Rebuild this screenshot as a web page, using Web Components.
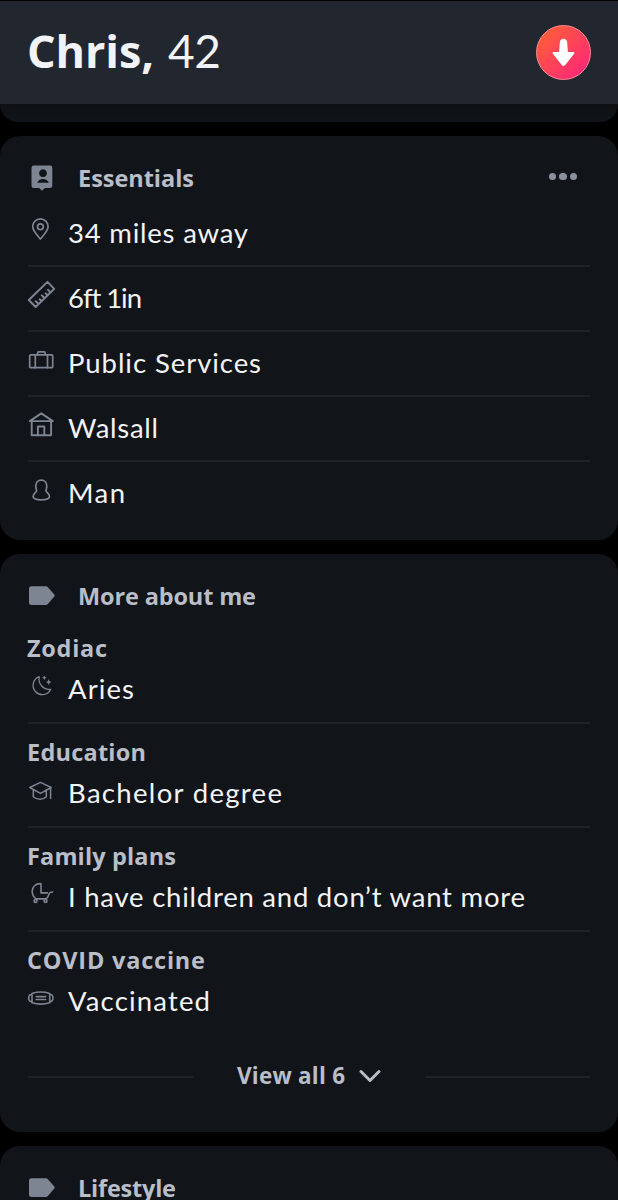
<!DOCTYPE html>
<html lang="en">
<head>
<meta charset="utf-8">
<title>Chris, 42</title>
<style>
    html, body {
        margin: 0;
        padding: 0;
        height: 1200px;
        overflow: hidden;
        background: #000;
    }

    body {
        font-family: Lato, "Open Sans", sans-serif;
        color: #f1f3f6;
    }
</style>
</head>
<body>
<profile-page></profile-page>

<script>
const icons = {
    badge: `<path fill="currentColor" stroke="none" fill-rule="evenodd" d="M6.7 1.5h16.4a2.2 2.2 0 0 1 2.2 2.2v18.1a2.2 2.2 0 0 1-2.2 2.2h-5.2L15 26.800 12.100 24H6.700a2.200 2.200 0 0 1-2.200-2.200V3.700a2.200 2.200 0 0 1 2.200-2.200zM16 5.300a3.900 3.900 0 1 0 .01 0zM10.300 18.800h11.400c-.6-2.500-3-3.900-5.700-3.900s-5.100 1.400-5.700 3.900z"/>`,
    tag: `<path fill="currentColor" stroke="none" d="M4.500 4.200h14.200c1 0 1.800.4 2.400 1.200l6.200 7c.6.700.6 1.400 0 2.100l-6.200 7.200c-.6.800-1.400 1.200-2.400 1.200H4.500a2.500 2.500 0 0 1-2.500-2.500V6.700a2.500 2.500 0 0 1 2.500-2.500z"/>`,
    pin: `<path d="M13.400 24C11 20.800 5.700 16.300 5.700 11.600a7.700 7.700 0 0 1 15.400 0C21.100 16.300 15.800 20.800 13.400 24z"/><circle cx="13.400" cy="11.700" r="2.900"/>`,
    ruler: `<path stroke-width="2" d="M1.800 20 20.500 1.900l6.700 7L8.600 27zM11.600 24.100 8.800 21.200M14.600 21.200l-1.900-2M17.600 18.300l-2.800-2.900M20.600 15.400l-1.900-2M23.600 12.500l-2.500-2.600"/>`,
    suitcase: `<rect x="2.700" y="9.900" width="23" height="12.800" rx="1"/><path d="M8.300 10v12.700M20.500 10v12.700M10.600 9.700V7.800q0-1 1-1h5.600q1 0 1 1v1.900"/>`,
    house: `<path stroke-width="1.900" d="M2.800 11.100 14.300 3.400l11.500 7.700zM4.700 11.300V25.200h19.400V11.300M10.900 25v-8.500h6.400V25"/>`,
    person: `<path d="M14.300 5.200c-3.500 0-5.500 2.600-5.500 6 0 2.100.8 3.500.8 4.600 0 1.600-3.500 2.600-3.500 5.700 0 2.200 3 3.300 8.200 3.300s8.200-1.100 8.200-3.300c0-3.100-3.500-4.100-3.500-5.700 0-1.100.8-2.500.8-4.600 0-3.400-2-6-5.500-6z"/>`,
    moon: `<path stroke-width="1.300" d="M12.200 4.600A9.300 9.300 0 1 0 23.700 17.500C16.500 17.800 10.800 12 12.200 4.600z"/><path fill="currentColor" stroke="none" d="m17.300 3.500.8 1.500 1.500.8-1.500.8-.8 1.500-.8-1.500-1.500-.8 1.500-.8zM21.700 7.300l.9 1.900 1.900.9-1.900.9-.9 1.900-.9-1.900-1.900-.9 1.900-.9z"/>`,
    cap: `<path stroke-width="1.500" d="M2.800 11.500 13.500 6.300l10.700 5.200-10.700 5.900zM6.300 13.600v7.100c3.600 3.300 9.900 3.300 13 0v-7M23.600 12v10.500"/>`,
    stroller: `<path stroke-width="1.600" d="M14 3.700v9.200h6.400M14 3.700C8.500 3.300 5.200 7 5.200 11.200c0 3.700 1.600 6 3.800 7.700h9.700c2.600-1.200 3-3.700 3.600-5.400.4-1.200 1.400-1.600 3.400-1.500"/><circle cx="8.500" cy="20.900" r="1.400"/><circle cx="18.500" cy="20.900" r="1.400"/>`,
    mask: `<path stroke-width="1.600" d="M5 9.400Q13.800 6.600 22.700 9.400v9.300Q13.800 21.500 5 18.700zM5 10.200C.6 10.500.6 17.600 5 17.900M22.700 10.200c4.400.3 4.400 7.400 0 7.700M9.200 12.600h9.400M9.200 15.500h9.400"/>`
};

class ProfileIcon extends HTMLElement {
    constructor() {
        super();
        this.shadowDOM = this.attachShadow({mode: "open"});
    }

    connectedCallback() {
        this.shadowDOM.innerHTML = `
        <style>
            :host {
                display: block;
                flex: none;
                width: 28px;
                height: 28px;
                margin-left: -1px;
                color: #7d8492;
            }

            svg {
                display: block;
            }
        </style>
        <svg width="28" height="28" viewBox="0 0 28 28" fill="none" stroke="currentColor" stroke-width="1.700" stroke-linejoin="round" stroke-linecap="round">${icons[this.getAttribute("name")]}</svg>`;
    }
}

// Spreads its letters so that the line takes the width given in the attribute.
class FitText extends HTMLElement {
    constructor() {
        super();
        this.shadowDOM = this.attachShadow({mode: "open"});
    }

    connectedCallback() {
        this.shadowDOM.innerHTML = `
        <style>
            :host {
                display: inline-block;
                white-space: nowrap;
                font-variant-ligatures: none;
            }
        </style>
        <slot></slot>`;
        const width = Number(this.getAttribute("width"));
        const natural = this.getBoundingClientRect().width;
        const gaps = this.textContent.length - 1;
        this.style.letterSpacing = ((width - natural) / gaps).toFixed(3) + "px";
        this.style.width = width + "px";
    }
}

class ProfileHeader extends HTMLElement {
    constructor() {
        super();
        this.shadowDOM = this.attachShadow({mode: "open"});
    }

    connectedCallback() {
        this.shadowDOM.innerHTML = `
        <style>
            :host {
                display: flex;
                align-items: center;
                justify-content: space-between;
                box-sizing: border-box;
                height: 103px;
                margin-top: 1px;
                padding: 0 27px;
                background: #22262e;
            }

            h1 {
                display: flex;
                align-items: baseline;
                gap: 14px;
                margin: 0 0 4px;
                font-size: 46px;
                line-height: 54px;
                font-weight: 400;
            }

            .name {
                font-family: "Open Sans", sans-serif;
                font-size: 45px;
                font-weight: 700;
            }

            button {
                width: 55px;
                height: 55px;
                padding: 0;
                border: 1px solid #ff8b95;
                border-radius: 50%;
                background: linear-gradient(135deg, #ff6036 8%, #fd267a 92%) border-box;
            }

            svg {
                display: block;
            }
        </style>
        <h1><fit-text class="name" width="127">Chris,</fit-text><fit-text width="53">42</fit-text></h1>
        <button aria-label="Close profile">
            <svg width="53" height="53" viewBox="0 0 54 54" fill="#fff">
                <path d="M27 13c2.200 0 3.500 1.400 3.700 3.400l.8 10.200h5.500c1.100 0 1.500.9.800 1.800l-9 11.400c-1.100 1.300-2.500 1.300-3.600 0l-9-11.400c-.7-.9-.3-1.800.8-1.800h5.500l.8-10.200c.2-2 1.500-3.400 3.700-3.400z"/>
            </svg>
        </button>`;
    }
}

class ProfileCard extends HTMLElement {
    constructor() {
        super();
        this.shadowDOM = this.attachShadow({mode: "open"});
    }

    connectedCallback() {
        this.shadowDOM.innerHTML = `
        <style>
            :host {
                display: block;
                box-sizing: border-box;
                padding: 0 28px 13px;
                border-radius: 20px;
                background: #111418;
            }

            header {
                display: flex;
                align-items: center;
                height: 48px;
                padding-top: 18px;
            }

            h2 {
                flex: 1;
                margin: 0 0 0 23px;
                font: 700 23.500px/28px "Open Sans", sans-serif;
                color: #b9bec9;
            }
        </style>
        <header>
            <profile-icon name="${this.getAttribute("icon")}"></profile-icon>
            <h2><slot name="title"></slot></h2>
            <slot name="action"></slot>
        </header>
        <slot></slot>`;
    }
}

class MoreDots extends HTMLElement {
    constructor() {
        super();
        this.shadowDOM = this.attachShadow({mode: "open"});
    }

    connectedCallback() {
        this.shadowDOM.innerHTML = `
        <style>
            :host {
                display: flex;
                gap: 3.200px;
                margin: 0 13px 3px 0;
            }

            i {
                width: 7.200px;
                height: 7.200px;
                border-radius: 50%;
                background: #8b909d;
            }
        </style>
        <i></i><i></i><i></i>`;
    }
}

class ProfileRow extends HTMLElement {
    constructor() {
        super();
        this.shadowDOM = this.attachShadow({mode: "open"});
    }

    connectedCallback() {
        this.shadowDOM.innerHTML = `
        <style>
            :host {
                display: block;
                border-bottom: 2px solid #1e2229;
            }

            :host(:last-of-type) {
                border-bottom: 0;
            }

            .label {
                padding-top: 12px;
                font: 700 23.500px/32px "Open Sans", sans-serif;
                color: #b9bec9;
                margin-left: -1px;
            }

            .value {
                display: flex;
                align-items: center;
                gap: 13px;
                height: 61px;
                padding-bottom: 2px;
                font-size: 27.500px;
                line-height: 32px;
            }

            :host([labelled]) .value {
                height: 50px;
                padding-bottom: 8px;
            }

            profile-icon {
                margin-bottom: 7px;
            }
        </style>
        ${this.hasAttribute("labelled") ? `<div class="label"><slot name="label"></slot></div>` : ""}
        <div class="value">
            <profile-icon name="${this.getAttribute("icon")}"></profile-icon>
            <slot></slot>
        </div>`;
    }
}

class ViewAll extends HTMLElement {
    constructor() {
        super();
        this.shadowDOM = this.attachShadow({mode: "open"});
    }

    connectedCallback() {
        this.shadowDOM.innerHTML = `
        <style>
            :host {
                display: flex;
                align-items: center;
                height: 85px;
                font: 700 22.500px/28px "Open Sans", sans-serif;
                color: #b9bec9;
            }

            hr {
                width: 165px;
                height: 2px;
                margin: 0;
                border: 0;
                background: #1e2229;
            }

            div {
                flex: 1;
                display: flex;
                align-items: center;
                justify-content: center;
                gap: 14px;
                padding-bottom: 1px;
            }

            svg {
                display: block;
            }
        </style>
        <hr>
        <div>
            <slot></slot>
            <svg width="22" height="16" viewBox="0 0 22 16" fill="none" stroke="currentColor" stroke-width="3" stroke-linecap="round" stroke-linejoin="round"><path d="m2 3.500 9 9 9-9"/></svg>
        </div>
        <hr>`;
    }
}

class ProfilePage extends HTMLElement {
    constructor() {
        super();
        this.shadowDOM = this.attachShadow({mode: "open"});
    }

    connectedCallback() {
        this.shadowDOM.innerHTML = `
        <style>
            :host {
                display: flow-root;
                width: 618px;
                height: 1200px;
                overflow: hidden;
            }

            .previous {
                height: 18px;
                border-radius: 0 0 20px 20px;
                background: linear-gradient(#0e1114, #111418);
            }

            main {
                display: flex;
                flex-direction: column;
                gap: 14px;
            }

            .essentials {
                height: 404px;
            }
        </style>
        <profile-header></profile-header>
        <main>
            <div class="previous"></div>
            <profile-card class="essentials" icon="badge">
                <fit-text slot="title" width="116">Essentials</fit-text>
                <more-dots slot="action"></more-dots>
                <profile-row icon="pin"><fit-text width="180">34 miles away</fit-text></profile-row>
                <profile-row icon="ruler"><fit-text width="74">6ft 1in</fit-text></profile-row>
                <profile-row icon="suitcase"><fit-text width="193">Public Services</fit-text></profile-row>
                <profile-row icon="house"><fit-text width="90">Walsall</fit-text></profile-row>
                <profile-row icon="person"><fit-text width="57">Man</fit-text></profile-row>
            </profile-card>
            <profile-card icon="tag">
                <fit-text slot="title" width="178">More about me</fit-text>
                <profile-row labelled icon="moon"><fit-text slot="label" width="80">Zodiac</fit-text><fit-text width="66">Aries</fit-text></profile-row>
                <profile-row labelled icon="cap"><fit-text slot="label" width="119">Education</fit-text><fit-text width="214">Bachelor degree</fit-text></profile-row>
                <profile-row labelled icon="stroller"><fit-text slot="label" width="149">Family plans</fit-text><fit-text width="457">I have children and don’t want more</fit-text></profile-row>
                <profile-row labelled icon="mask"><fit-text slot="label" width="178">COVID vaccine</fit-text><fit-text width="142">Vaccinated</fit-text></profile-row>
                <view-all><fit-text width="108">View all 6</fit-text></view-all>
            </profile-card>
            <profile-card icon="tag">
                <fit-text slot="title" width="98">Lifestyle</fit-text>
            </profile-card>
        </main>`;
    }
}

customElements.define("profile-icon", ProfileIcon);
customElements.define("profile-header", ProfileHeader);
customElements.define("more-dots", MoreDots);
customElements.define("profile-card", ProfileCard);
customElements.define("profile-row", ProfileRow);
customElements.define("view-all", ViewAll);
customElements.define("profile-page", ProfilePage);
// last, because it measures text inside the elements above
customElements.define("fit-text", FitText);
</script>
</body>
</html>
